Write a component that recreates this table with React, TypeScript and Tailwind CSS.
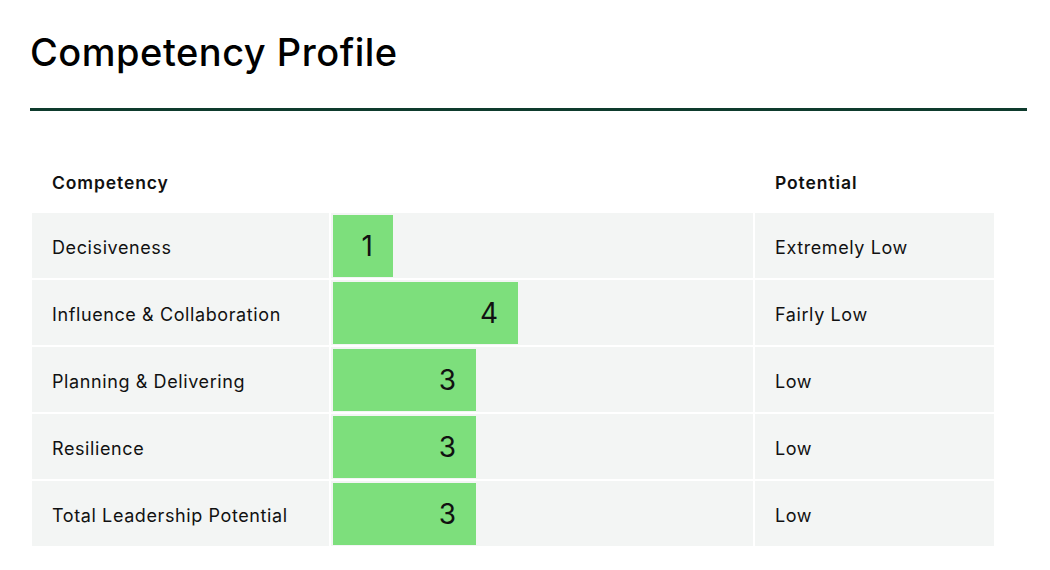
import React from 'react';

interface Row {
  name: string;
  score: number;
  potential: string;
}

const rows: Row[] = [
  { name: 'Decisiveness', score: 1, potential: 'Extremely Low' },
  { name: 'Influence & Collaboration', score: 4, potential: 'Fairly Low' },
  { name: 'Planning & Delivering', score: 3, potential: 'Low' },
  { name: 'Resilience', score: 3, potential: 'Low' },
  { name: 'Total Leadership Potential', score: 3, potential: 'Low' },
];

// bar width grows with the score
const barWidth = (score: number) => Math.round(18 + score * 41.75);

export default function App() {
  return (
    <div className="w-[1050px] h-[570px] bg-white text-[#111] font-['Inter',sans-serif]">
      <div className="px-[30px] pt-[28px]">
        <h1 className="text-[38px] leading-[48px] font-medium tracking-[0.5px] text-black">
          Competency Profile
        </h1>
        <div className="mt-[32px] h-[3px] w-[997px] bg-[#0e3b2d]" />
      </div>

      <table className="ml-[30px] mt-[48px] border-separate border-spacing-[2px] w-[966px]">
        <thead>
          <tr className="h-[50px]">
            <th className="w-[297px] pl-5 pb-[5px] text-left text-[17.5px] font-semibold tracking-[0.9px]">Competency</th>
            <th className="w-[422px]" />
            <th className="pl-5 pb-[5px] text-left text-[17.5px] font-semibold tracking-[0.9px]">Potential</th>
          </tr>
        </thead>
        <tbody>
          {rows.map((row) => (
            <tr key={row.name} className="h-[65px]">
              <td className="bg-[#f3f5f4] pl-5 pt-[4px] text-[18px] tracking-[0.6px]">{row.name}</td>
              <td className="bg-[#f3f5f4] p-0 align-top">
                <div
                  className="ml-[2px] mt-[2px] h-[62px] bg-[#7ddf7c] flex items-center justify-end pr-[20px] text-[28px]"
                  style={{ width: barWidth(row.score) }}
                >
                  {row.score}
                </div>
              </td>
              <td className="bg-[#f3f5f4] pl-5 pt-[4px] text-[18px] tracking-[0.6px]">{row.potential}</td>
            </tr>
          ))}
        </tbody>
      </table>
    </div>
  );
}
